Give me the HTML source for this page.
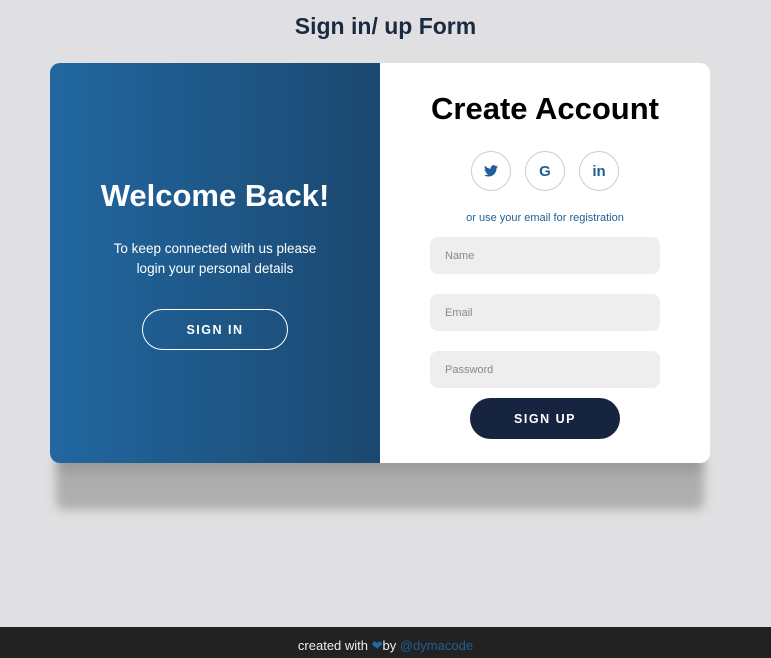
<!DOCTYPE html>
<html><head><style>
*{margin:0;padding:0;box-sizing:border-box}
html,body{width:771px;height:658px;overflow:hidden}
body{background:#e0e0e2;font-family:"Liberation Sans",sans-serif;position:relative;color:#000}
h2.t{position:absolute;top:13px;left:0;width:771px;text-align:center;font-size:23px;color:#1b2a42;font-weight:bold}
.shadow{position:absolute;left:56px;top:455px;width:648px;height:55px;background:linear-gradient(#8a8a8a,#adadad 40%,#b0b0b0);filter:blur(5px);border-radius:8px}
.card{position:absolute;left:50px;top:63px;width:660px;height:400px;border-radius:10px;overflow:hidden;background:#fff}
.left{position:absolute;left:0;top:0;width:330px;height:400px;background:linear-gradient(90deg,#2167a0,#1b4870);color:#fff;text-align:center}
.left h1{position:absolute;top:115px;width:100%;font-size:31px;font-weight:bold}
.left p{position:absolute;top:176px;width:100%;font-size:13.5px;line-height:20px}
.btn{position:absolute;border-radius:22px;font-weight:bold;font-size:12.5px;letter-spacing:1.5px;text-align:center}
.b1{left:92px;top:246px;width:146px;height:41px;border:1px solid #fff;line-height:41px;color:#fff}
.right{position:absolute;left:330px;top:0;width:330px;height:400px;text-align:center}
.right h1{position:absolute;top:28px;width:100%;font-size:31px;font-weight:bold;color:#000}
.soc{position:absolute;top:88px;width:40px;height:40px;border:1px solid #ccc;border-radius:50%;color:#1f5f96;font-weight:bold;font-size:15px;line-height:39px}
.or{position:absolute;top:149px;width:100%;font-size:11px;color:#1f5f96}
.in{position:absolute;left:50px;width:230px;height:37px;background:#eee;border-radius:8px;text-align:left;padding-left:15px;font-size:11px;color:#888;line-height:39px}
.b2{left:90px;top:335px;width:150px;height:41px;background:#17243f;color:#fff;line-height:42px}
.foot{position:absolute;left:0;top:627px;width:771px;height:31px;background:#222;color:#eee;text-align:center;font-size:13px;line-height:38px}
.foot span{color:#1f5f96}
</style></head><body>
<h2 class="t">Sign in/ up Form</h2>
<div class="shadow"></div>
<div class="card">
<div class="left">
<h1>Welcome Back!</h1>
<p>To keep connected with us please<br>login your personal details</p>
<div class="btn b1">SIGN IN</div>
</div>
<div class="right">
<h1>Create Account</h1>
<div class="soc" style="left:91px"><svg width="14" height="12" viewBox="0 0 24 20" style="vertical-align:-1px"><path fill="#1f5f96" d="M24 2.4a10 10 0 0 1-2.8.8A5 5 0 0 0 23.3.4a10 10 0 0 1-3.1 1.2A4.9 4.9 0 0 0 11.8 6 14 14 0 0 1 1.7.9a4.9 4.9 0 0 0 1.5 6.6A4.9 4.9 0 0 1 1 6.9a4.9 4.9 0 0 0 3.9 4.8 5 5 0 0 1-2.2.1 4.9 4.9 0 0 0 4.6 3.4A9.9 9.9 0 0 1 0 17.3 14 14 0 0 0 7.5 19.5c9.1 0 14-7.5 14-14v-.6A10 10 0 0 0 24 2.4z"/></svg></div>
<div class="soc" style="left:145px">G</div>
<div class="soc" style="left:199px">in</div>
<div class="or">or use your email for registration</div>
<div class="in" style="top:174px">Name</div>
<div class="in" style="top:231px">Email</div>
<div class="in" style="top:288px">Password</div>
<div class="btn b2">SIGN UP</div>
</div>
</div>
<div class="foot">created with <span style="color:#1f6aa8">&#10084;</span>by <span>@dymacode</span></div>
</body></html>
